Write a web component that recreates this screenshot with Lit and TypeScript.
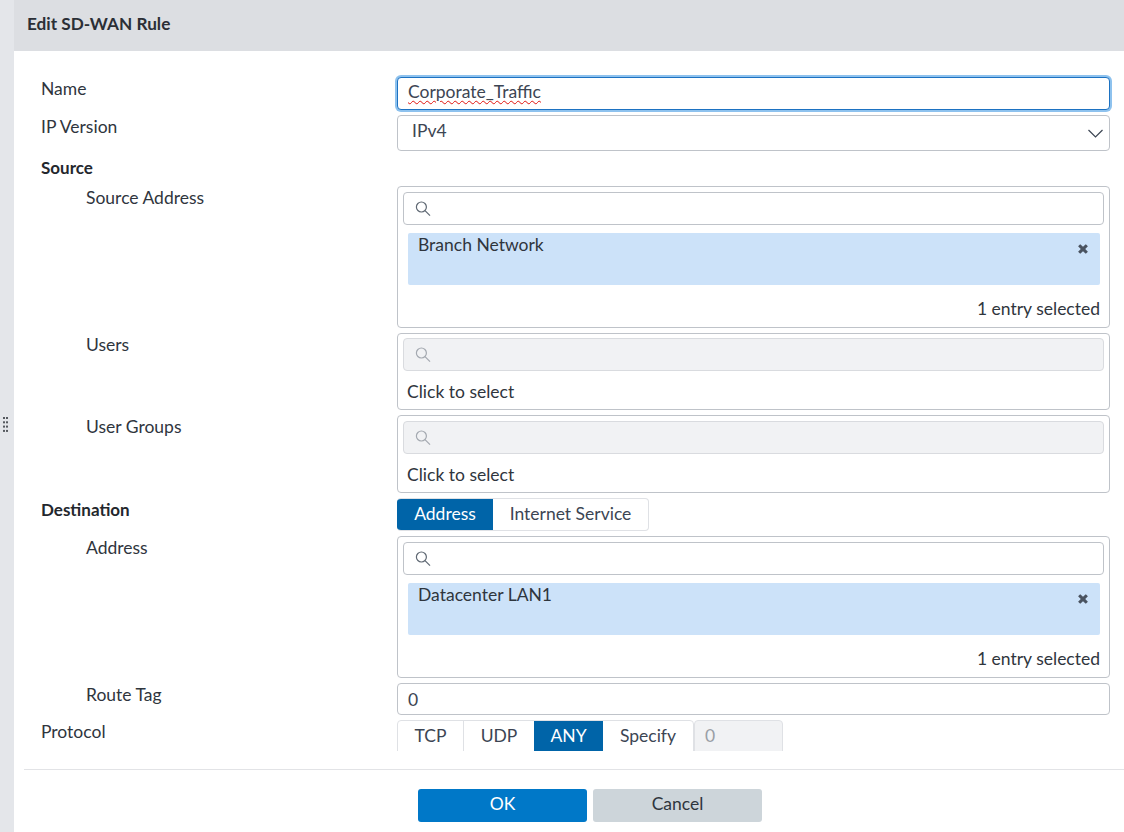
import { LitElement, html, css, svg } from 'lit';
import { customElement } from 'lit/decorators.js';

const searchIcon = html`<svg class="search-icon" width="16" height="15" viewBox="0 0 16 15" fill="none" stroke="currentColor" stroke-width="1.2">
  <circle cx="6.4" cy="6" r="5"></circle>
  <path d="M10 9.6 L15 14.6"></path>
</svg>`;

const closeIcon = html`<svg class="close-icon" width="10" height="10" viewBox="0 0 10 10">
  <path d="M2.2 0.2 L5 2.8 L7.8 0.2 L9.9 2.3 L7.2 5 L9.9 7.7 L7.8 9.8 L5 7.2 L2.2 9.8 L0.1 7.7 L2.8 5 L0.1 2.3 Z" fill="#4a5360"></path>
</svg>`;

const grip = svg`${[0, 1, 2, 3].map((r) => [0, 1].map((c) => svg`<rect x=${c * 3} y=${r * 4.3} width="2" height="2" fill="#55595f"></rect>`))}`;

@customElement('app-root')
export class AppRoot extends LitElement {
  static styles = css`
    :host {
      display: block;
      height: 832px;
      overflow: hidden;
      font-family: Lato, 'Liberation Sans', sans-serif;
      font-size: 17.5px;
      line-height: 22px;
      color: #2f353d;
      background: #fff;
    }
    * {
      box-sizing: border-box;
    }
    .page {
      display: flex;
      height: 832px;
    }
    .strip {
      flex: 0 0 14px;
      background: #e4e6ea;
      display: flex;
      align-items: center;
      padding-left: 3px;
      padding-top: 16px;
    }
    .main {
      flex: 1;
      display: flex;
      flex-direction: column;
      min-width: 0;
    }
    .header {
      flex: 0 0 51px;
      background: #dcdee2;
      padding-left: 13px;
      display: flex;
      align-items: center;
      font-size: 17.2px;
      font-weight: 700;
      color: #2b2f36;
      padding-bottom: 4px;
    }
    .form {
      flex: 0 0 700px;
      padding: 26px 14px 0 27px;
      display: grid;
      grid-template-columns: 356px 713px;
      row-gap: 5px;
      align-content: start;
      overflow: hidden;
    }
    .label {
      padding-top: 1px;
    }
    .label.sub {
      padding-left: 45px;
    }
    .label.head {
      font-size: 17px;
      font-weight: 700;
      color: #23272d;
    }
    .head-row {
      height: 25px;
    }
    .input {
      height: 32px;
      border: 1px solid #bfc3c9;
      border-radius: 4px;
      padding: 1px 10px 0;
      display: flex;
      align-items: center;
      color: #3c4553;
      background: #fff;
    }
    .name-input {
      height: 33px;
      padding: 0 10px 3px;
      border: 1px solid #1d72c2;
      box-shadow: 0 0 0 2px #8ec2ee;
    }
    .name-input span {
      text-decoration: underline wavy #e0140f 1px;
      text-underline-offset: 2px;
    }
    .select {
      height: 36px;
      justify-content: space-between;
      padding: 0 6px 4px 14px;
    }
    .select svg {
      margin-top: 4px;
    }
    .box {
      border: 1px solid #bfc3c9;
      border-radius: 4px;
      padding: 5px;
      display: flex;
      flex-direction: column;
    }
    .box.filled {
      height: 142px;
    }
    .box.empty {
      height: 77px;
      padding-top: 4px;
    }
    .box.empty.tall {
      height: 78px;
      padding-top: 5px;
    }
    .search {
      height: 33px;
      flex: none;
      border: 1px solid #bfc3c9;
      border-radius: 4px;
      padding-left: 11px;
      display: flex;
      align-items: center;
      color: #5f6873;
      background: #fff;
    }
    .search.disabled {
      background: #f1f2f4;
      border-color: #d9dbdf;
      color: #a4a9b0;
    }
    .chip {
      height: 52px;
      margin: 8px 4px 0 5px;
      padding: 1px 0 0 10px;
      border-radius: 2px;
      background: #cce2f9;
      display: flex;
      justify-content: space-between;
      color: #2f353d;
    }
    .close-icon {
      margin: 10px 12px 0 0;
    }
    .count {
      text-align: right;
      margin-top: 13px;
      padding-right: 4px;
    }
    .hint {
      margin-top: 10px;
      padding-left: 4px;
    }
    .tabs {
      display: flex;
      height: 33px;
      width: max-content;
      border: 1px solid #dfe1e5;
      border-radius: 4px;
      overflow: hidden;
    }
    .tab {
      display: flex;
      align-items: center;
      justify-content: center;
      color: #3c4553;
    }
    .tab.on {
      background: #0064a8;
      color: #fff;
    }
    .dest {
      border-left: none;
    }
    .dest .tab {
      padding-bottom: 2px;
    }
    .dest .tab:nth-child(1) {
      width: 96px;
    }
    .dest .tab:nth-child(2) {
      width: 155px;
    }
    .proto-row {
      display: flex;
      height: 31px;
      overflow: hidden;
    }
    .proto {
      height: 40px;
      flex: none;
    }
    .proto .tab:nth-child(1) {
      width: 66px;
      border-right: 1px solid #dfe1e5;
    }
    .proto .tab:nth-child(2) {
      width: 70px;
    }
    .proto .tab:nth-child(3) {
      width: 69px;
    }
    .proto .tab:nth-child(4) {
      width: 90px;
    }
    .proto .tab {
      height: 30px;
    }
    .port {
      width: 89px;
      height: 40px;
      border: 1px solid #dfe1e5;
      border-radius: 4px;
      background: #f1f2f4;
      color: #9a9fa6;
      padding: 4px 10px 0;
    }
    .footer {
      margin: 18px 0 0 10px;
      border-top: 1px solid #e2e3e6;
      padding-top: 19px;
      display: flex;
      padding-left: 394px;
      gap: 6px;
    }
    .btn {
      width: 169px;
      height: 33px;
      border-radius: 3px;
      display: flex;
      align-items: center;
      justify-content: center;
      padding-bottom: 4px;
    }
    .btn.ok {
      background: #0078c8;
      color: #fff;
    }
    .btn.cancel {
      background: #cdd5da;
      color: #2f353d;
    }
  `;

  private picker(entry: string) {
    return html`<div class="box filled">
      <div class="search">${searchIcon}</div>
      <div class="chip"><span>${entry}</span>${closeIcon}</div>
      <div class="count">1 entry selected</div>
    </div>`;
  }

  private emptyPicker(tall = false) {
    return html`<div class="box empty ${tall ? 'tall' : ''}">
      <div class="search disabled">${searchIcon}</div>
      <div class="hint">Click to select</div>
    </div>`;
  }

  render() {
    return html`<div class="page">
      <div class="strip"><svg width="5" height="15" viewBox="0 0 5 15">${grip}</svg></div>
      <div class="main">
        <div class="header">Edit SD-WAN Rule</div>
        <div class="form">
          <div class="label">Name</div>
          <div class="input name-input"><span>Corporate_Traffic</span></div>

          <div class="label">IP Version</div>
          <div class="input select">
            IPv4
            <svg width="15" height="9" viewBox="0 0 15 9" fill="none" stroke="#3c4553" stroke-width="1.2"><path d="M0.5 1 L7.5 8 L14.5 1"></path></svg>
          </div>

          <div class="label head head-row">Source</div>
          <div></div>

          <div class="label sub">Source Address</div>
          ${this.picker('Branch Network')}

          <div class="label sub">Users</div>
          ${this.emptyPicker()}

          <div class="label sub">User Groups</div>
          ${this.emptyPicker(true)}

          <div class="label head">Destination</div>
          <div class="tabs dest">
            <div class="tab on">Address</div>
            <div class="tab">Internet Service</div>
          </div>

          <div class="label sub">Address</div>
          ${this.picker('Datacenter LAN1')}

          <div class="label sub">Route Tag</div>
          <div class="input">0</div>

          <div class="label">Protocol</div>
          <div class="proto-row">
            <div class="tabs proto">
              <div class="tab">TCP</div>
              <div class="tab">UDP</div>
              <div class="tab on">ANY</div>
              <div class="tab">Specify</div>
            </div>
            <div class="port">0</div>
          </div>
        </div>
        <div class="footer">
          <div class="btn ok">OK</div>
          <div class="btn cancel">Cancel</div>
        </div>
      </div>
    </div>`;
  }
}
